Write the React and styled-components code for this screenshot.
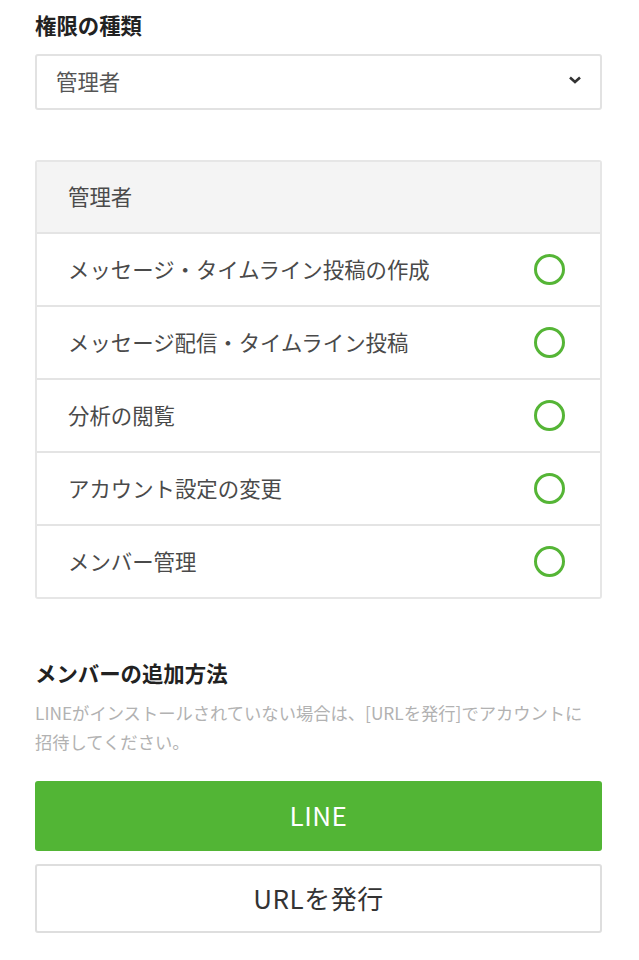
import styled, { createGlobalStyle } from "styled-components";

const GlobalStyle = createGlobalStyle`
  html, body {
    margin: 0;
    padding: 0;
    background: #fff;
  }
  body {
    font-family: "Noto Sans CJK JP", "Noto Sans", sans-serif;
    color: #333;
  }
  * { box-sizing: border-box; }
`;

const Page = styled.div`
  padding: 8px 37px 28px 35px;
`;

const SectionTitle = styled.h3`
  margin: 0;
  font-size: 21.4px;
  font-weight: 700;
  line-height: 34px;
  color: #222;
`;

const SelectBox = styled.div`
  margin-top: 12px;
  height: 56px;
  border: 2px solid #e2e2e2;
  border-radius: 3px;
  display: flex;
  align-items: center;
  justify-content: space-between;
  padding: 0 18px 4px 19px;
  font-size: 21.4px;
  color: #555;
`;

const Table = styled.div`
  margin-top: 50px;
  border: 2px solid #e6e6e6;
  border-radius: 3px;
  overflow: hidden;
`;

const Row = styled.div`
  height: ${(p) => (p.$head ? "70px" : "73px")};
  display: flex;
  align-items: center;
  justify-content: space-between;
  padding: 0 35px 3px 31px;
  font-size: 21.4px;
  color: #4a4a4a;
  background: ${(p) => (p.$head ? "#f4f4f4" : "#fff")};
  & + & {
    border-top: 2px solid #e4e4e4;
  }
`;

const Check = styled.span`
  width: 31px;
  height: 31px;
  margin-top: 2px;
  border: 3px solid #55b536;
  border-radius: 50%;
  flex-shrink: 0;
`;

const MethodSection = styled.div`
  margin-top: 57px;
`;

const Note = styled.p`
  margin: 8px 0 0;
  font-size: 17.3px;
  line-height: 29px;
  color: #b2b2b2;
`;

const Button = styled.button`
  display: block;
  width: 100%;
  height: ${(p) => (p.$primary ? "70px" : "69px")};
  margin-top: ${(p) => (p.$primary ? "25px" : "13px")};
  border-radius: 3px;
  border: ${(p) => (p.$primary ? "none" : "2px solid #dedede")};
  background: ${(p) => (p.$primary ? "#52b535" : "#fff")};
  color: ${(p) => (p.$primary ? "#fff" : "#333")};
  font-family: inherit;
  font-size: 26px;
  letter-spacing: 0.5px;
  padding-bottom: 4px;
  cursor: pointer;
`;

const permissions = [
  "メッセージ・タイムライン投稿の作成",
  "メッセージ配信・タイムライン投稿",
  "分析の閲覧",
  "アカウント設定の変更",
  "メンバー管理",
];

export default function App() {
  return (
    <>
      <GlobalStyle />
      <Page>
        <SectionTitle>権限の種類</SectionTitle>
        <SelectBox>
          <span>管理者</span>
          <svg width="14" height="10" viewBox="0 0 14 10">
            <path d="M2 2.5 L7 7 L12 2.5" fill="none" stroke="#333" strokeWidth="2.6" />
          </svg>
        </SelectBox>

        <Table>
          <Row $head>管理者</Row>
          {permissions.map((p) => (
            <Row key={p}>
              <span>{p}</span>
              <Check />
            </Row>
          ))}
        </Table>

        <MethodSection>
          <SectionTitle>メンバーの追加方法</SectionTitle>
          <Note>
            LINEがインストールされていない場合は、[URLを発行]でアカウントに
            <br />
            招待してください。
          </Note>
          <Button $primary>LINE</Button>
          <Button>URLを発行</Button>
        </MethodSection>
      </Page>
    </>
  );
}
